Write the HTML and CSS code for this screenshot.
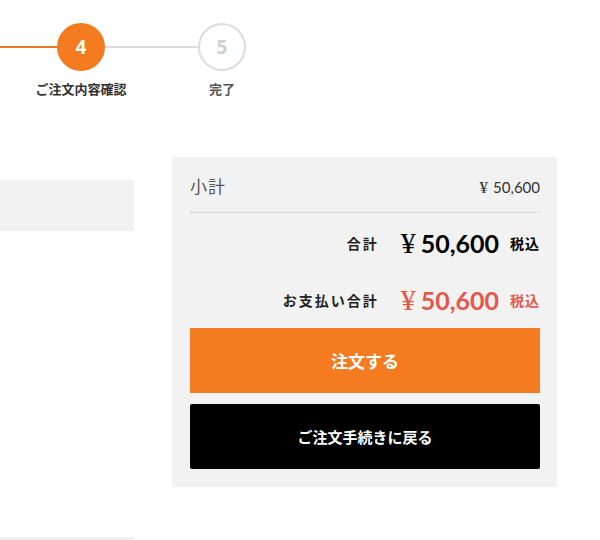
FILE: index.html
```html
<!DOCTYPE html>
<html lang="ja">
<head>
    <meta charset="UTF-8">
    <meta name="viewport" content="width=device-width, initial-scale=1.0">
    <title>ご注文内容確認</title>
    <link rel="stylesheet" href="styles.css">
</head>
<body>
    <div class="stepper">
        <div class="step-line done"></div>
        <div class="step-circle current">4</div>
        <div class="step-line"></div>
        <div class="step-circle">5</div>
        <div class="step-label label-4">ご注文内容確認</div>
        <div class="step-label label-5">完了</div>
    </div>

    <div class="main">
        <div class="left-col">
            <div class="gray-box"></div>
            <div class="gray-box lower"></div>
        </div>

        <div class="summary">
            <div class="subtotal-row">
                <span class="subtotal-label">小計</span>
                <span class="subtotal-price"><span class="yen">¥</span>50,600</span>
            </div>
            <div class="total-row">
                <span class="total-label">合計</span>
                <span class="total-price"><span class="yen">¥</span>50,600</span>
                <span class="tax">税込</span>
            </div>
            <div class="total-row pay">
                <span class="total-label">お支払い合計</span>
                <span class="total-price"><span class="yen">¥</span>50,600</span>
                <span class="tax">税込</span>
            </div>
            <button class="btn btn-order">注文する</button>
            <button class="btn btn-back">ご注文手続きに戻る</button>
        </div>
    </div>
</body>
</html>
```

FILE: styles.css
```css
body {
    margin: 0;
    background-color: white;
    color: #222;
    font-family: "Liberation Serif", "Noto Sans CJK JP", serif;
}
.stepper {
    display: grid;
    grid-template-columns: 57px 48px 93px 48px;
    grid-template-rows: 48px auto;
    align-items: center;
    padding-top: 23px;
}
.step-line {
    height: 2px;
    background-color: #dddddd;
}
.step-line.done {
    background-color: #e87a2a;
}
.step-circle {
    width: 48px;
    height: 48px;
    box-sizing: border-box;
    border: 2px solid #dddddd;
    border-radius: 50%;
    display: flex;
    align-items: center;
    justify-content: center;
    font-family: "Open Sans", "Noto Sans CJK JP", sans-serif;
    font-weight: bold;
    font-size: 19px;
    color: #d2d2d2;
    background-color: white;
}
.step-circle.current {
    background-color: #f47b20;
    border-color: #f47b20;
    color: white;
}
.step-label {
    grid-row: 2;
    justify-self: center;
    white-space: nowrap;
    font-size: 13px;
    font-weight: bold;
    color: #333;
    margin-top: 8px;
}
.label-4 {
    grid-column: 2;
}
.label-5 {
    grid-column: 4;
    color: #555;
}
.main {
    display: flex;
    align-items: flex-start;
    margin-top: 59px;
}
.left-col {
    width: 134px;
    margin-right: 38px;
}
.gray-box {
    height: 51px;
    margin-top: 23px;
    background-color: #f2f2f2;
}
.gray-box.lower {
    height: 3px;
    margin-top: 306px;
}
.summary {
    width: 385px;
    box-sizing: border-box;
    padding: 0 17px 18px 18px;
    background-color: #f2f2f2;
}
.subtotal-row {
    display: flex;
    justify-content: space-between;
    align-items: center;
    padding: 18px 0 12px;
    line-height: 24px;
    border-bottom: 1px dotted #c8c8c8;
}
.subtotal-label {
    font-size: 17px;
    color: #555;
    letter-spacing: 1px;
}
.subtotal-price {
    font-family: "Lato", sans-serif;
    font-size: 15px;
    color: #333;
}
.subtotal-price .yen {
    font-size: 17px;
    margin-right: 5px;
}
.yen {
    font-family: "Liberation Serif", serif;
    font-weight: normal;
}
.total-row {
    display: flex;
    justify-content: flex-end;
    align-items: center;
    height: 36px;
    margin-top: 12px;
    color: black;
}
.total-row.pay {
    margin-top: 21px;
    margin-bottom: 10px;
    color: #e5574b;
}
.total-label {
    font-size: 14px;
    font-weight: bold;
    color: #222;
    letter-spacing: 2px;
    margin-right: 22px;
}
.total-price {
    font-family: "Lato", sans-serif;
    font-weight: bold;
    font-size: 25px;
    margin-right: 11px;
}
.total-price .yen {
    font-size: 30px;
    margin-right: 5px;
}
.tax {
    font-size: 14px;
    font-weight: bold;
    letter-spacing: 1px;
}
.btn {
    display: block;
    width: 100%;
    height: 65px;
    border: none;
    color: white;
    cursor: pointer;
}
.btn-order {
    background-color: #f47b20;
    font-family: "Noto Sans CJK JP", sans-serif;
    font-weight: bold;
    font-size: 17px;
}
.btn-back {
    margin-top: 11px;
    background-color: black;
    border-radius: 2px;
    font-family: "Liberation Serif", "Noto Sans CJK JP", serif;
    font-weight: bold;
    font-size: 15px;
}
```
